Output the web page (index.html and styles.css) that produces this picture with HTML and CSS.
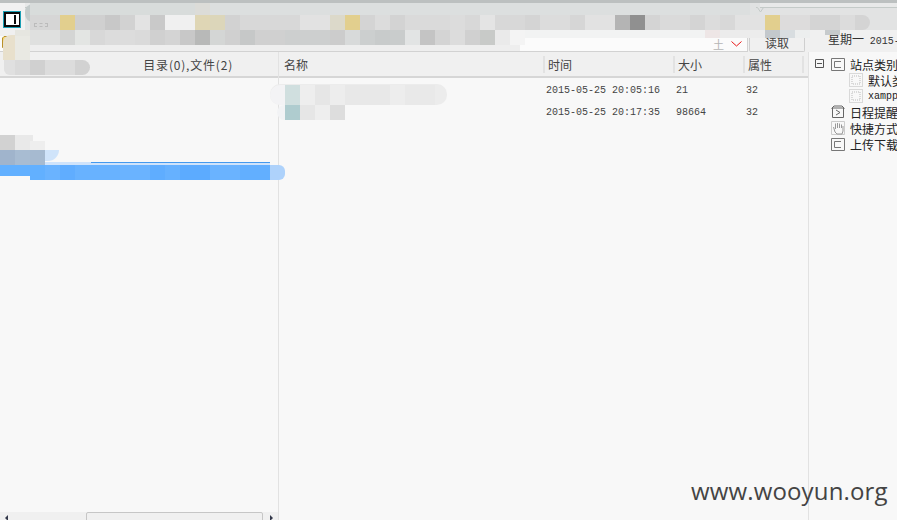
FILE: index.html
```html
<!DOCTYPE html>
<html lang="zh">
<head>
<meta charset="utf-8">
<title>文件管理</title>
<link rel="stylesheet" href="styles.css">
</head>
<body>
<div class="app">
  <header class="top">
    <div class="tabs">
      <span class="tabs-corner"></span>
      <div class="tab-strip"></div>
    </div>
    <div class="addr-row">
      <div class="addr">
        <span class="addr-plus">土</span>
        <svg class="addr-arrow" width="11" height="6" viewBox="0 0 11 6"><path d="M.5.5 5.5 5 10.500.5" fill="none" stroke="#e81818"/></svg>
      </div>
      <button class="read">读取</button>
      <div class="date">星期一&nbsp;<span class="date-num">2015-</span></div>
    </div>
  </header>

  <main class="panes">
    <section class="pane pane-left">
      <div class="head head-left"><span>目录(0),文件(2)</span></div>
      <div class="pane-body"></div>
      <div class="hscroll">
        <span class="arrow arrow-l"></span>
        <span class="thumb"></span>
        <span class="arrow arrow-r"></span>
      </div>
    </section>

    <section class="pane pane-mid">
      <div class="head cols">
        <span>名称</span><span class="sep">时间</span><span class="sep">大小</span><span class="sep sep-end">属性</span>
      </div>
      <div class="rows">
        <div class="cols row"><span></span><span class="cell">2015-05-25 20:05:16</span><span class="cell">21</span><span class="cell">32</span></div>
        <div class="cols row"><span></span><span class="cell">2015-05-25 20:17:35</span><span class="cell">98664</span><span class="cell">32</span></div>
      </div>
    </section>

    <aside class="pane pane-tree">
      <ul class="tree">
        <li class="node">
          <svg class="expander" width="9" height="9" viewBox="0 0 9 9"><path d="M.5.5h8v8h-8zM2 4.500h5" fill="none" stroke="#555"/></svg>
          <svg class="ico" width="14" height="13" viewBox="0 0 14 13"><path d="M.5.5h13v12H.5zM10 3.500H3.500v6H10" fill="none" stroke="#777"/></svg>
          <span>站点类别</span>
        </li>
        <li class="node sub">
          <svg class="ico" width="14" height="14" viewBox="0 0 14 14"><path d="M.5.5h13v13H.5zM3 3h8v8H3z" fill="none" stroke="#bbb" stroke-dasharray="1 1"/></svg>
          <span>默认类</span>
        </li>
        <li class="node sub">
          <svg class="ico" width="14" height="14" viewBox="0 0 14 14"><path d="M.5.5h13v13H.5zM3 3h8v8H3z" fill="none" stroke="#bbb" stroke-dasharray="1 1"/></svg>
          <span class="latin">xampp</span>
        </li>
        <li class="node">
          <svg class="ico" width="14" height="14" viewBox="0 0 14 14"><path d="M3 1h8M.5 3.500 3 1M13.500 3.500 11 1M1.500 3v9.500h11V3zM5 5l4 2.500L5 10" fill="none" stroke="#666"/></svg>
          <span>日程提醒</span>
        </li>
        <li class="node">
          <svg class="ico" width="14" height="14" viewBox="0 0 14 14"><path d="M.5.5h13v13H.5z" fill="none" stroke="#ccc"/><path d="M2.500 6l1.500 5 2 2h5l1-3V5M4.500 2.500V8M6.500 2V7M8.500 2.500V7M10.500 3.500V7" fill="none" stroke="#999"/></svg>
          <span>快捷方式</span>
        </li>
        <li class="node">
          <svg class="ico" width="14" height="13" viewBox="0 0 14 13"><path d="M.5.5h13v12H.5zM10 3.500H3.500v6H10" fill="none" stroke="#777"/></svg>
          <span>上传下载</span>
        </li>
      </ul>
    </aside>
  </main>

  <!-- mosaic that covers the redacted parts of the capture -->
  <svg class="folder" width="8" height="12" viewBox="0 0 8 12"><path d="M.5 11.500V2L2 .5h6v11z" fill="#f5d66e" stroke="#b9902a"/></svg>
  <div class="blur blur-corner"></div>
  <div class="blur blur-top-soft"></div>
  <div class="blur blur-row2"></div>
  <div class="blur blur-dashes"></div>
  <div class="blur blur-row3"></div>
  <div class="blur blur-row3b"></div>
  <div class="blur blur-row3c"></div>
  <div class="blur blur-row4"></div>
  <div class="blur blur-leftcap"></div>
  <div class="blur blur-headtop"></div>
  <div class="blur blur-headcap"></div>
  <div class="blur blur-halo1"></div>
  <div class="blur blur-halo2"></div>
  <div class="blur blur-name1"></div>
  <div class="blur blur-name2"></div>
  <div class="blur blur-tree1"></div>
  <div class="blur blur-tree1b"></div>
  <div class="blur blur-tree2glow"></div>
  <div class="blur blur-tree2"></div>
  <div class="blur blur-selglow"></div>
  <div class="blur blur-selline"></div>
  <div class="blur blur-sel"></div>

  <svg class="tab-notch" width="9" height="6" viewBox="0 0 9 6"><path d="M0 .5h1.500L4.500 5l3-4.500H9" fill="none" stroke="#c4cac8"/></svg>
  <svg class="logo" width="18" height="17" viewBox="0 0 18 17"><rect x=".5" y=".5" width="17" height="16" fill="#0a0a0a" stroke="#1a9fb5"/><rect x="3" y="3" width="13" height="11" fill="#fff"/><rect x="11" y="4" width="2" height="9" fill="#0a0a0a"/></svg>
  <div class="watermark">www.wooyun.org</div>
</div>
</body>
</html>
```

FILE: styles.css
```css
* { box-sizing: border-box; }
html, body { margin: 0; height: 100%; }
body { overflow: hidden; background: #f8f8f8; font-family: "Noto Sans CJK SC", "Liberation Sans", sans-serif; font-size: 12px; color: #333; }

.app { position: relative; width: 897px; height: 520px; display: flex; flex-direction: column; overflow: hidden; }

/* top toolbar */
.top { height: 52px; flex: none; background: #f0f0f0; border-top: 3px solid #bcc0c0; display: flex; flex-direction: column; }
.tabs { height: 27px; flex: none; display: flex; }
.tabs-corner { width: 25px; flex: none; background: #f1f1f1; }
.tab-strip { flex: 1; background: linear-gradient(#e8e9e9 0 4px, #c4cac8 4px 5px, #e2e3e3 5px); position: relative; }
.addr-row { flex: 1; display: flex; align-items: flex-end; }
.addr { width: 748px; height: 16px; flex: none; background: #fbfbfb; border-bottom: 1px solid #d2d2d2; border-right: 1px solid #d2d2d2; display: flex; align-items: center; justify-content: flex-end; gap: 7px; padding-right: 5px; }
.addr-plus { color: #b5b5b5; font-size: 11px; line-height: 14px; }
.addr-arrow { margin-top: 1px; }
.read { width: 56px; height: 17px; flex: none; margin: 0 0 0 1px; padding: 0; border: 1px solid #cfcfcf; border-top: 0; border-radius: 0 0 2px 2px; background: #f0f0f0; color: #444; font: 12px/16px "Noto Sans CJK SC", sans-serif; }
.date { margin: 0 0 2px 23px; white-space: nowrap; line-height: 17px; color: #333; }
.date-num { margin-left: 3px; font-family: "Liberation Mono", monospace; font-size: 10px; }

/* panes */
.panes { flex: 1; min-height: 0; display: grid; grid-template-columns: 279px 530px 88px; }
.pane { min-height: 0; display: flex; flex-direction: column; border-right: 1px solid #e2e2e2; }
.pane-tree { border-right: 0; background: #f8f8f8; }
.head { height: 26px; flex: none; background: #f0f0f0; border-bottom: 2px solid #d6d6d6; color: #444; line-height: 25px; }
.head-left { text-align: right; padding-right: 45px; letter-spacing: .8px; }
.pane-body { flex: 1; }
.hscroll { height: 8px; flex: none; background: #f0f0f0; position: relative; }
.thumb { position: absolute; left: 86px; top: 0; width: 177px; height: 10px; border: 1px solid #c6c6c6; border-radius: 2px 2px 0 0; background: #f0f0f0; }
.arrow { position: absolute; top: 3px; width: 0; height: 0; border-top: 3px solid transparent; border-bottom: 3px solid transparent; }
.arrow-l { left: 5px; border-right: 3px solid #33384a; }
.arrow-r { left: 270px; border-left: 3px solid #33384a; }

.cols { display: grid; grid-template-columns: 264px 130px 70px 65px; }
.head.cols > span { padding-left: 5px; }
.head.cols > .sep { border-left: 2px solid #e2e2e2; height: 17px; margin-top: 4px; line-height: 17px; padding-left: 3px; }
.head.cols > .sep-end { border-right: 2px solid #e2e2e2; width: 61px; }
.rows { padding-top: 2px; }
.row { height: 22px; align-items: center; }
.cell { padding-left: 3px; font: 10px/14px "Liberation Mono", monospace; color: #444; }

/* tree */
.tree { list-style: none; margin: 0; padding: 4px 0 0 6px; }
.node { height: 16px; display: flex; align-items: center; white-space: nowrap; position: relative; padding-left: 16px; color: #222; }
.expander { position: absolute; left: 0; top: 3px; }
.ico { flex: none; margin-right: 5px; }
.sub { padding-left: 35px; }
.sub .ico { margin-left: -1px; }
.latin { font: 10px "Liberation Mono", monospace; }

/* mosaic overlays */
.blur { position: absolute; background-repeat: no-repeat; }
.blur-corner { left: 25px; top: 4px; width: 8px; height: 18px; border-radius: 8px 0 0 8px; background: #c4cbcb; }
.blur-top-soft { left: 30px; top: 3px; width: 730px; height: 12px;
  background: linear-gradient(90deg,#d8dcdb 0 165px,#dcdcd8 165px 180px,#dcdfdf 180px 720px,#e0e2e2 720px); }
.blur-row2 { left: 30px; top: 15px; width: 840px; height: 15px; border-radius: 0 8px 8px 0;
  background: linear-gradient(90deg,#d6d6d6 0 30px,#e2cf8e 30px 45px,#cfcfcf 45px 60px,#d0d0d0 60px 75px,#c8c8c8 75px 90px,#d2d2d2 90px 105px,#e3e3e3 105px 120px,#c9c9c9 120px 135px,#f0f0f0 135px 165px,#dfd6b5 165px 180px,#dcd6ba 180px 195px,#d2d2d2 195px 210px,#d8d8d8 210px 270px,#e2e2e2 270px 300px,#dcd9ca 300px 315px,#e2cf8e 315px 330px,#d4d4d4 330px 345px,#dcdcdc 345px 360px,#d3d3d3 360px 375px,#dadada 375px 420px,#dcdcdc 420px 435px,#d8d8d8 435px 450px,#e4e4e4 450px 465px,#d8d8d8 465px 495px,#d4d4d4 495px 510px,#dcdcdc 510px 540px,#d6d6d6 540px 555px,#e2e2e2 555px 585px,#b4b4b4 585px 600px,#909090 600px 615px,#d4d4d4 615px 630px,#dadada 630px 660px,#d4d4d4 660px 675px,#dcdcdc 675px 690px,#d8d8d8 690px 705px,#e2e2e2 705px 735px,#e2cf8e 735px 750px,#dddcdc 750px 780px,#d4d4d4 780px 810px,#dcdcdc 810px 825px,#d4d4d4 825px 840px); }
.blur-dashes { left: 34px; top: 23px; width: 14px; height: 4px; border: 1px dashed #bbb; }
.blur-row3 { left: 30px; top: 30px; width: 495px; height: 15px;
  background: linear-gradient(90deg,#dfe0df 0 30px,#d4d5d4 30px 45px,#e3e5e3 45px 60px,#d8d8d8 60px 75px,#dcdcdc 75px 105px,#dadada 105px 120px,#d0d0d0 120px 135px,#d4d4d4 135px 150px,#c8c8c8 150px 165px,#b8b9b8 165px 180px,#d4d6d5 180px 195px,#d0d0d0 195px 210px,#c6c8c8 210px 225px,#d0d0d0 225px 255px,#cdcfcf 255px 300px,#cccccc 300px 315px,#d8dada 315px 330px,#cccfcf 330px 345px,#c8cbcb 345px 360px,#c9cccc 360px 375px,#e2e4e4 375px 390px,#c4c4c4 390px 405px,#d4d4d4 405px 420px,#dcdcdc 420px 435px,#d0d0d0 435px 450px,#c8cac8 450px 465px,#eaeaea 465px 480px,#f4f4f4 480px 495px); }
.blur-row3b { left: 525px; top: 30px; width: 285px; height: 8px;
  background: linear-gradient(90deg,#f2f3f3 0 180px,#eee6e6 180px 195px,#ececec 195px 240px,#c3c8cc 240px 255px,#d8dde0 255px 270px,#eceeee 270px 285px); }
.blur-row3c { left: 825px; top: 30px; width: 15px; height: 5px; background: #c6cacc; }
.blur-row4 { left: 30px; top: 45px; width: 490px; height: 6px; background: #eeeeee; }
.blur-leftcap { left: 3px; top: 35px; width: 27px; height: 25px; border-radius: 8px 0 0 0; background: linear-gradient(90deg,#e8e0cc 0 12px,#e9e9e3 12px); }
.blur-headtop { left: 15px; top: 30px; width: 15px; height: 6px; background: #e6e6e0; }
.blur-headcap { left: 4px; top: 60px; width: 86px; height: 15px; border-radius: 0 9px 9px 7px;
  background: linear-gradient(90deg,#e0e0e0 0 11px,#dadada 11px 26px,#d0d0d0 26px 41px,#dcdcdc 41px 71px,#d2d2d2 71px 86px); }
.blur-halo1 { left: 270px; top: 84px; width: 177px; height: 21px; border-radius: 10px; background: #ececec; }
.blur-halo2 { left: 277px; top: 105px; width: 20px; height: 15px; border-radius: 8px 0 0 8px; background: #f2f3f5; }
.blur-name1 { left: 270px; top: 85px; width: 165px; height: 20px; border-radius: 10px 0 0 10px;
  background: linear-gradient(90deg,#f3f3f5 0 15px,#d0dfdf 15px 30px,#eeeeee 30px 45px,#e6e6e6 45px 60px,#ededed 60px 75px,#e8e8e8 75px 120px,#ededed 120px 135px,#e9e9e9 135px 165px); }
.blur-name2 { left: 285px; top: 105px; width: 60px; height: 15px;
  background: linear-gradient(90deg,#afcccf 0 15px,#e6e6e6 15px 30px,#eeeeee 30px 45px,#dddddd 45px 60px); }
.blur-tree1 { left: 0; top: 135px; width: 33px; height: 6px;
  background: linear-gradient(90deg,#d2d2d2 0 15px,#e9e9e9 15px); }
.blur-tree1b { left: 0; top: 141px; width: 45px; height: 9px;
  background: linear-gradient(90deg,#d2d2d2 0 15px,#e9e9e9 15px 30px,#eeeeee 30px); }
.blur-tree2glow { left: 45px; top: 150px; width: 14px; height: 11px; border-radius: 0 0 12px 0; background: #d0e4fa; }
.blur-tree2 { left: 0; top: 150px; width: 45px; height: 15px;
  background: linear-gradient(90deg,#a0b4cc 0 15px,#a8bcd2 15px 30px,#a6bad0 30px 45px); }
.blur-selline { left: 91px; top: 162px; width: 179px; height: 1px; background: #4499ee; }
.blur-selglow { left: 45px; top: 162px; width: 225px; height: 3px; background: #cfe3fb; }
.blur-sel { left: 0; top: 165px; width: 285px; height: 15px; border-radius: 0 6px 6px 0;
  background: linear-gradient(90deg,#62b0ff 0 45px,#6ab3ff 45px 60px,#60adff 60px 75px,#68b2ff 75px 120px,#6ab3ff 120px 150px,#5fadff 150px 165px,#66b1ff 165px 180px,#5cabff 180px 210px,#6ab3ff 210px 240px,#62afff 240px 270px,#aed2fb 270px 285px);
  clip-path: polygon(0 0, 100% 0, 100% 100%, 30px 100%, 30px 11px, 0 11px); }

.tab-notch { position: absolute; left: 756px; top: 7px; }
.logo { position: absolute; left: 3px; top: 11px; }
.folder { position: absolute; left: 2px; top: 36px; }
.watermark { position: absolute; left: 691px; top: 474px; font: 24px/34px "Open Sans", sans-serif; color: #444; letter-spacing: .15px; }
```
